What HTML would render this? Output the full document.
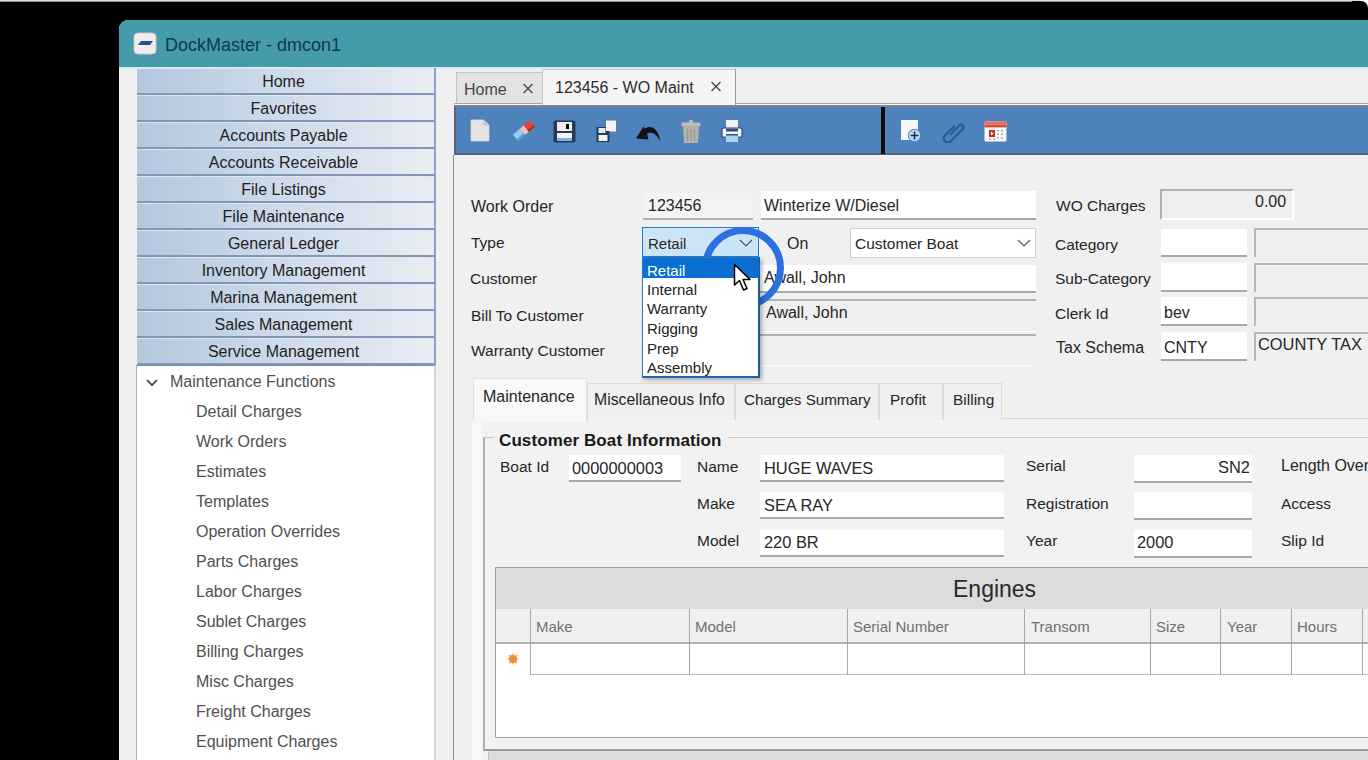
<!DOCTYPE html>
<html><head><meta charset="utf-8">
<style>
*{margin:0;padding:0;box-sizing:border-box}
html,body{width:1368px;height:760px;overflow:hidden;background:#000}
body{position:relative;font-family:"Liberation Sans",sans-serif;color:#262626}
.a{position:absolute}
.t{position:absolute;white-space:nowrap;line-height:1;font-size:16px}
#topline{left:0;top:0;width:1368px;height:2px;background:linear-gradient(#fff,#777)}
#tr{right:0;top:0;width:8px;height:8px;background:#fff}
#trc{right:0;top:1px;width:16px;height:16px;background:#000;border-top-right-radius:7px}
#win{left:119px;top:20px;width:1260px;height:745px;background:#f0f0f0;border-top-left-radius:9px;overflow:hidden}
#title{left:119px;top:20px;width:1260px;height:47px;background:#469bab;border-top-left-radius:9px}
#ttext{left:165px;top:36px;font-size:18px;color:#0c3a4f}
#tline{left:119px;top:67px;width:1260px;height:2px;background:#d2ecf2}
.sb{position:absolute;left:137px;width:299px;height:27px;background:linear-gradient(90deg,#b3c7df 0%,#c9d7e8 40%,#e9edf3 100%);border-bottom:2px solid #8296b6;border-right:2px solid #8aa2d0;box-shadow:inset 0 1px 0 #dfe8f2}
.sb span{position:absolute;left:0;width:293px;text-align:center;top:6px;font-size:16px;line-height:1;color:#1e1e1e}
#tree{left:136px;top:365px;width:300px;height:420px;background:#fff;border-left:1px solid #b5b5b5;border-right:2px solid #d7d7d7;border-top:1px solid #6f87b4}
.ti{position:absolute;left:59px;font-size:16px;line-height:1;color:#505050;white-space:nowrap}

.bx{position:absolute}
.lbl{position:absolute;white-space:nowrap;line-height:1;font-size:15.5px;color:#262626}
.fw{position:absolute;background:#fff;border-bottom:2px solid #a8a8a8}
.fg{position:absolute;background:#f0f0f0;border-bottom:2px solid #b4b4b4}
.tab2{position:absolute;background:#f0f0f0;border:1px solid #dadada;border-bottom:none}
.col{position:absolute;top:609px;width:1px;height:66px;background:#a8a8a8}
.hd{position:absolute;top:619px;font-size:15px;line-height:1;color:#707070;white-space:nowrap}
</style></head><body>
<div id="topline" class="a"></div>
<div id="tr" class="a"></div><div id="trc" class="a"></div>
<div id="win" class="a"></div>
<div id="title" class="a"></div>
  <svg class="a" style="left:133px;top:32px" width="24" height="23" viewBox="0 0 24 23"><rect x="1" y="1" width="22" height="21" rx="4" fill="#f1ecec" stroke="#cfc6c6" stroke-width="1"/><path d="M5 13 L8 9 L20 9 L17 13 Z" fill="#214f9a"/></svg>
  <div id="ttext" class="t">DockMaster - dmcon1</div>
<div id="tline" class="a"></div>
<div class="sb" style="top:68px"><span>Home</span></div>
<div class="sb" style="top:95px"><span>Favorites</span></div>
<div class="sb" style="top:122px"><span>Accounts Payable</span></div>
<div class="sb" style="top:149px"><span>Accounts Receivable</span></div>
<div class="sb" style="top:176px"><span>File Listings</span></div>
<div class="sb" style="top:203px"><span>File Maintenance</span></div>
<div class="sb" style="top:230px"><span>General Ledger</span></div>
<div class="sb" style="top:257px"><span>Inventory Management</span></div>
<div class="sb" style="top:284px"><span>Marina Management</span></div>
<div class="sb" style="top:311px"><span>Sales Management</span></div>
<div class="sb" style="top:338px"><span>Service Management</span></div>
<div id="tree" class="a">
  <svg class="a" style="left:9px;top:13px" width="12" height="8" viewBox="0 0 12 8"><path d="M1 1 L6 6 L11 1" fill="none" stroke="#333" stroke-width="1.6"/></svg>
  <div class="ti" style="left:33px;top:8px">Maintenance Functions</div>
  <div class="ti" style="top:38px">Detail Charges</div>
  <div class="ti" style="top:68px">Work Orders</div>
  <div class="ti" style="top:98px">Estimates</div>
  <div class="ti" style="top:128px">Templates</div>
  <div class="ti" style="top:158px">Operation Overrides</div>
  <div class="ti" style="top:188px">Parts Charges</div>
  <div class="ti" style="top:218px">Labor Charges</div>
  <div class="ti" style="top:248px">Sublet Charges</div>
  <div class="ti" style="top:278px">Billing Charges</div>
  <div class="ti" style="top:308px">Misc Charges</div>
  <div class="ti" style="top:338px">Freight Charges</div>
  <div class="ti" style="top:368px">Equipment Charges</div>
</div>
<!-- MAIN -->

<!-- top tabs -->
<div class="bx" style="left:454px;top:103px;width:914px;height:3px;background:#f8f8f8;border-top:1px solid #a4a4a4"></div>
<div class="bx" style="left:456px;top:72px;width:87px;height:32px;background:#e3e3e3;border:1px solid #c4c4c4;border-bottom:1px solid #a4a4a4"></div>
<div class="lbl" style="left:464px;top:82px;font-size:16px;color:#464646">Home</div>
<svg class="bx" style="left:522px;top:83px" width="12" height="11" viewBox="0 0 12 11"><path d="M1.5 1 L10.5 10 M10.5 1 L1.5 10" stroke="#444" stroke-width="1.3"/></svg>
<div class="bx" style="left:542px;top:69px;width:194px;height:37px;background:#f5f5f5;border:1px solid #c8c8c8;border-right:1px solid #9a9a9a;border-bottom:none"></div>
<div class="lbl" style="left:555px;top:80px;font-size:16px;color:#2a2a2a">123456 - WO Maint</div>
<svg class="bx" style="left:710px;top:81px" width="12" height="11" viewBox="0 0 12 11"><path d="M1.5 1 L10.5 10 M10.5 1 L1.5 10" stroke="#444" stroke-width="1.3"/></svg>
<!-- toolbar -->
<div class="bx" style="left:454px;top:105px;width:914px;height:50px;background:#4e82bd;border-top:2px solid #7d8590;border-left:2px solid #5b6470;border-bottom:2px solid #56616d"></div>
<div class="bx" style="left:881px;top:107px;width:4px;height:47px;background:#0a0a0a"></div>

<svg class="bx" style="left:470px;top:119px" width="20" height="23" viewBox="0 0 20 23"><path d="M1 1 H14 L19 6 V22 H1 Z" fill="#e6e4e2" stroke="#d8d6d2" stroke-width="0.8"/><path d="M14 1 V6 H19" fill="#c9cfd8" stroke="#b8bcc4" stroke-width="0.8"/></svg>
<svg class="bx" style="left:511px;top:119px" width="26" height="23" viewBox="0 0 26 23"><g transform="rotate(-40 13 11.5)"><rect x="2" y="7.5" width="9" height="8" fill="#92cdf2"/><rect x="11" y="7.5" width="5" height="8" fill="#f4c4b8"/><rect x="16" y="7.5" width="8" height="8" fill="#e2483a"/><rect x="2" y="13.5" width="9" height="2" fill="#5a9ad0"/><rect x="16" y="13.5" width="8" height="2" fill="#b02a20"/></g></svg>
<svg class="bx" style="left:553px;top:120px" width="23" height="23" viewBox="0 0 23 23"><rect x="0.5" y="0.5" width="22" height="22" rx="2" fill="#26395a"/><rect x="4" y="2" width="15" height="9" fill="#eeeeee"/><rect x="13" y="4" width="3" height="5" fill="#000"/><rect x="4" y="13" width="15" height="5" fill="#f4f4f4"/><rect x="4" y="18" width="15" height="3" fill="#7fb2e0"/></svg>
<svg class="bx" style="left:596px;top:120px" width="21" height="23" viewBox="0 0 21 23"><rect x="10" y="0.5" width="10" height="11" fill="#f2f2f2"/><rect x="0.5" y="7" width="13" height="15" fill="#26395a"/><rect x="2.5" y="8" width="7" height="5" fill="#e8e8e8"/><rect x="2.5" y="15" width="9" height="6" fill="#f2f2f2"/><rect x="10" y="7" width="4" height="4" fill="#f2f2f2"/></svg>
<svg class="bx" style="left:635px;top:123px" width="27" height="20" viewBox="0 0 27 20"><path d="M1 15.5 L8.5 3.5 L9.5 5.5 C17 1 23.5 6 25.5 19 C21.5 10.5 17 8.5 12 10.5 L13.5 16.5 Z" fill="#141414"/></svg>
<svg class="bx" style="left:681px;top:119px" width="20" height="25" viewBox="0 0 20 25"><rect x="8" y="1" width="4" height="3" fill="#b4b4ac"/><rect x="0.5" y="3.5" width="19" height="4" rx="1" fill="#bdbdb5"/><path d="M2 7.5 H18 L17 24 H3 Z" fill="#b3b3ab"/><path d="M6.5 10 V22 M10 10 V22 M13.5 10 V22" stroke="#9a9a92" stroke-width="1.3"/></svg>
<svg class="bx" style="left:721px;top:119px" width="22" height="24" viewBox="0 0 22 24"><rect x="5" y="1" width="12" height="11" fill="#eef2f4"/><path d="M1 10 Q1 9 3 9 H19 Q21 9 21 11 V18 H1 Z" fill="#f4f6f8" stroke="#2e4a7a" stroke-width="1.2"/><rect x="5" y="9.5" width="12" height="3" fill="#2e4a7a"/><rect x="5" y="15" width="12" height="8" fill="#a8d4ec"/><rect x="5" y="15" width="12" height="1.5" fill="#2e4a7a"/></svg>
<svg class="bx" style="left:900px;top:119px" width="23" height="24" viewBox="0 0 23 24"><rect x="1" y="1" width="17" height="20" fill="#f6f6fa"/><circle cx="14.5" cy="16.5" r="6.2" fill="#b8dcf4" stroke="#4a80b8" stroke-width="1"/><path d="M14.5 12.5 V20.5 M10.5 16.5 H18.5" stroke="#1a3050" stroke-width="1.6"/></svg>
<svg class="bx" style="left:942px;top:122px" width="23" height="21" viewBox="0 0 23 21"><path d="M9 12 L17 3.5 Q19.5 1.5 21 3.5 Q22.5 5.5 20.5 7.5 L9 19 Q6 21.5 3 19 Q0.5 16.5 3 13.5 L12 4.5" fill="none" stroke="#2a5a9e" stroke-width="2.3" stroke-linecap="round"/></svg>
<svg class="bx" style="left:984px;top:121px" width="23" height="21" viewBox="0 0 23 21"><rect x="0.5" y="0.5" width="22" height="20" rx="1.5" fill="#f8f8fa"/><rect x="0.5" y="0.5" width="22" height="6" fill="#e8735e"/><rect x="0.5" y="4.5" width="22" height="1.5" fill="#c8483a"/><rect x="5" y="9" width="6" height="7" fill="#c43224"/><path d="M7 10.5 L9.5 12.5 L7 14.5Z" fill="#fff"/><g fill="#9aa8b8"><rect x="13" y="9" width="2" height="1.5"/><rect x="17" y="9" width="2" height="1.5"/><rect x="13" y="12.5" width="2" height="1.5"/><rect x="17" y="12.5" width="2" height="1.5"/><rect x="13" y="16" width="2" height="1.5"/><rect x="17" y="16" width="2" height="1.5"/><rect x="5" y="17.5" width="2" height="1.5"/><rect x="9" y="17.5" width="2" height="1.5"/></g></svg>

<!-- form labels -->
<div class="lbl" style="left:471px;top:199px;font-size:16px">Work Order</div>
<div class="lbl" style="left:471px;top:235px">Type</div>
<div class="lbl" style="left:470px;top:271px">Customer</div>
<div class="lbl" style="left:471px;top:308px">Bill To Customer</div>
<div class="lbl" style="left:471px;top:343px">Warranty Customer</div>
<!-- fields -->
<div class="fg" style="left:643px;top:193px;width:110px;height:27px;background:#f3f3f3"></div>
<div class="lbl" style="left:648px;top:198px;font-size:16px">123456</div>
<div class="fw" style="left:761px;top:191px;width:275px;height:29px"></div>
<div class="lbl" style="left:764px;top:198px;font-size:16px">Winterize W/Diesel</div>
<div class="lbl" style="left:787px;top:236px;font-size:16px">On</div>
<div class="bx" style="left:850px;top:228px;width:186px;height:30px;background:#fff;border:1px solid #cfcfcf"></div>
<div class="lbl" style="left:855px;top:236px">Customer Boat</div>
<svg class="bx" style="left:1017px;top:239px" width="14" height="8" viewBox="0 0 14 8"><path d="M1 1 L7 7 L13 1" fill="none" stroke="#555" stroke-width="1.2"/></svg>
<div class="fw" style="left:760px;top:265px;width:276px;height:28px"></div>
<div class="lbl" style="left:764px;top:270px;font-size:16px">Awall, John</div>
<div class="bx" style="left:760px;top:299px;width:276px;height:33px;background:#efefef;border-top:2px solid #b2b2b2;border-bottom:1px solid #fbfbfb"></div>
<div class="lbl" style="left:766px;top:305px;font-size:16px">Awall, John</div>
<div class="bx" style="left:760px;top:334px;width:276px;height:32px;background:#efefef;border-top:2px solid #b2b2b2;border-bottom:1px solid #fbfbfb"></div>
<!-- right labels -->
<div class="lbl" style="left:1056px;top:198px">WO Charges</div>
<div class="lbl" style="left:1055px;top:237px">Category</div>
<div class="lbl" style="left:1055px;top:271px">Sub-Category</div>
<div class="lbl" style="left:1055px;top:306px">Clerk Id</div>
<div class="lbl" style="left:1056px;top:340px;font-size:16px">Tax Schema</div>
<div class="bx" style="left:1160px;top:189px;width:134px;height:31px;background:#efefef;border-top:2px solid #b0b0b0;border-left:2px solid #b0b0b0;border-right:2px solid #fff;border-bottom:2px solid #fff"></div>
<div class="lbl" style="left:1255px;top:194px;font-size:16px">0.00</div>
<div class="fw" style="left:1161px;top:229px;width:86px;height:28px"></div>
<div class="fw" style="left:1161px;top:263px;width:86px;height:29px"></div>
<div class="fw" style="left:1161px;top:297px;width:86px;height:29px"></div>
<div class="lbl" style="left:1164px;top:305px;font-size:16px">bev</div>
<div class="fw" style="left:1161px;top:332px;width:86px;height:29px"></div>
<div class="lbl" style="left:1164px;top:340px;font-size:16px">CNTY</div>
<div class="bx" style="left:1254px;top:228px;width:120px;height:29px;background:#f0f0f0;border-top:2px solid #b8b8b8;border-left:2px solid #b8b8b8"></div>
<div class="bx" style="left:1254px;top:263px;width:120px;height:29px;background:#f0f0f0;border-top:2px solid #b8b8b8;border-left:2px solid #b8b8b8"></div>
<div class="bx" style="left:1254px;top:297px;width:120px;height:29px;background:#f0f0f0;border-top:2px solid #b8b8b8;border-left:2px solid #b8b8b8"></div>
<div class="bx" style="left:1254px;top:332px;width:120px;height:29px;background:#f0f0f0;border-top:2px solid #b8b8b8;border-left:2px solid #b8b8b8"></div>
<div class="lbl" style="left:1258px;top:336px;font-size:16.4px">COUNTY TAX</div>
<!-- lower tabs -->
<div class="bx" style="left:453px;top:155px;width:1px;height:605px;background:#8a8a8a"></div>
<div class="bx" style="left:472px;top:420px;width:900px;height:340px;background:#f2f2f2;border-left:10px solid #f8f8f8"></div>
<div class="bx" style="left:586px;top:418px;width:782px;height:1px;background:#d6d6d6"></div>
<div class="tab2" style="left:587px;top:383px;width:148px;height:37px"></div>
<div class="tab2" style="left:735px;top:383px;width:144px;height:37px"></div>
<div class="tab2" style="left:879px;top:383px;width:64px;height:37px"></div>
<div class="tab2" style="left:943px;top:383px;width:59px;height:37px"></div>
<div class="bx" style="left:473px;top:378px;width:114px;height:44px;background:#f8f8f8;border:1px solid #e0e0e0;border-bottom:none"></div>
<div class="lbl" style="left:483px;top:389px;font-size:16px">Maintenance</div>
<div class="lbl" style="left:594px;top:392px;font-size:15.8px">Miscellaneous Info</div>
<div class="lbl" style="left:744px;top:392px;font-size:15.2px">Charges Summary</div>
<div class="lbl" style="left:890px;top:392px">Profit</div>
<div class="lbl" style="left:953px;top:392px">Billing</div>
<!-- group box -->
<div class="bx" style="left:483px;top:437px;width:890px;height:314px;border-top:1px solid #c8c8c8;border-left:2px solid #b0b0b0;border-bottom:2px solid #9c9c9c"></div>
<div class="bx" style="left:494px;top:428px;width:234px;height:20px;background:#f2f2f2"></div>
<div class="lbl" style="left:499px;top:432px;font-size:17px;font-weight:bold;letter-spacing:0.1px;color:#1a1a1a">Customer Boat Information</div>
<div class="lbl" style="left:500px;top:459px">Boat Id</div>
<div class="fw" style="left:569px;top:455px;width:112px;height:27px"></div>
<div class="lbl" style="left:572px;top:460px;font-size:16.4px">0000000003</div>
<div class="lbl" style="left:697px;top:459px">Name</div>
<div class="lbl" style="left:697px;top:496px">Make</div>
<div class="lbl" style="left:697px;top:533px">Model</div>
<div class="fw" style="left:760px;top:455px;width:244px;height:27px"></div>
<div class="fw" style="left:760px;top:492px;width:244px;height:27px"></div>
<div class="fw" style="left:760px;top:530px;width:244px;height:27px"></div>
<div class="lbl" style="left:764px;top:460px;font-size:16.4px">HUGE WAVES</div>
<div class="lbl" style="left:764px;top:497px;font-size:16.4px">SEA RAY</div>
<div class="lbl" style="left:764px;top:534px;font-size:16.4px">220 BR</div>
<div class="lbl" style="left:1026px;top:458px">Serial</div>
<div class="lbl" style="left:1026px;top:496px">Registration</div>
<div class="lbl" style="left:1026px;top:533px">Year</div>
<div class="fw" style="left:1134px;top:455px;width:118px;height:28px"></div>
<div class="fw" style="left:1134px;top:492px;width:118px;height:28px"></div>
<div class="fw" style="left:1134px;top:530px;width:118px;height:28px"></div>
<div class="lbl" style="left:1218px;top:459px;font-size:16.4px">SN2</div>
<div class="lbl" style="left:1137px;top:534px;font-size:16.4px">2000</div>
<div class="lbl" style="left:1281px;top:458px;font-size:16px">Length Over</div>
<div class="lbl" style="left:1281px;top:496px">Access</div>
<div class="lbl" style="left:1281px;top:533px">Slip Id</div>
<!-- engines grid -->
<div class="bx" style="left:495px;top:567px;width:880px;height:171px;background:#fff;border:1px solid #a0a0a0;border-right:none"></div>
<div class="bx" style="left:496px;top:568px;width:872px;height:41px;background:#dcdcdc"></div>
<div class="lbl" style="left:953px;top:578px;font-size:23px;color:#2a2a2a">Engines</div>
<div class="bx" style="left:496px;top:609px;width:872px;height:35px;background:#f0f0f0;border-bottom:2px solid #b0b0b0"></div>
<div class="bx" style="left:530px;top:674px;width:838px;height:1px;background:#b8b8b8"></div>
<div class="col" style="left:530px"></div>
<div class="col" style="left:689px"></div>
<div class="col" style="left:847px"></div>
<div class="col" style="left:1024px"></div>
<div class="col" style="left:1150px"></div>
<div class="col" style="left:1220px"></div>
<div class="col" style="left:1291px"></div>
<div class="col" style="left:1362px"></div>
<div class="hd" style="left:536px">Make</div>
<div class="hd" style="left:695px">Model</div>
<div class="hd" style="left:853px">Serial Number</div>
<div class="hd" style="left:1031px">Transom</div>
<div class="hd" style="left:1156px">Size</div>
<div class="hd" style="left:1227px">Year</div>
<div class="hd" style="left:1297px">Hours</div>
<svg class="bx" style="left:506px;top:652px" width="14" height="14" viewBox="0 0 14 14"><g stroke="#f2a04a" stroke-width="1.2"><path d="M7 1.5V12.5M1.5 7H12.5M3 3L11 11M11 3L3 11"/></g><circle cx="7" cy="7" r="4" fill="#ee8a30"/></svg>
<div class="bx" style="left:488px;top:751px;width:880px;height:9px;background:#dcdcdc;border-left:1px solid #c0c0c0"></div>
<!-- combobox + dropdown -->
<div class="bx" style="left:642px;top:227px;width:117px;height:30px;background:#cce4f7;border:1px solid #2b7cc4"></div>
<div class="lbl" style="left:648px;top:236px;font-size:15px">Retail</div>
<svg class="bx" style="left:739px;top:239px" width="14" height="8" viewBox="0 0 14 8"><path d="M1 1 L7 7 L13 1" fill="none" stroke="#555" stroke-width="1.2"/></svg>
<div id="ring" class="bx" style="left:702px;top:227px;width:82px;height:82px;border:7px solid #2c6fe0;border-radius:50%"></div>
<div class="bx" style="left:642px;top:257px;width:118px;height:121px;background:#fff;border:1px solid #2a7cc8;border-right:2px solid #1a5c9c;border-bottom:2px solid #1f64a8;box-shadow:2px 2px 4px rgba(0,0,0,0.3)"></div>
<div class="bx" style="left:643px;top:258px;width:116px;height:20px;background:#0a6fd0"></div>
<div class="lbl" style="left:647px;top:263px;font-size:15px;color:#fff">Retail</div>
<div class="lbl" style="left:647px;top:282px;font-size:15px;color:#222">Internal</div>
<div class="lbl" style="left:647px;top:301px;font-size:15px;color:#222">Warranty</div>
<div class="lbl" style="left:647px;top:321px;font-size:15px;color:#222">Rigging</div>
<div class="lbl" style="left:647px;top:341px;font-size:15px;color:#222">Prep</div>
<div class="lbl" style="left:647px;top:360px;font-size:15px;color:#222">Assembly</div>
<svg class="bx" style="left:733px;top:263px" width="22" height="32" viewBox="0 0 22 32"><path d="M1.5 1.5 L1.5 22 L6.5 17.5 L10.5 27 L14 25.5 L10 16.5 L17 16.5 Z" fill="#fff" stroke="#000" stroke-width="1.5" stroke-linejoin="round"/></svg>
</body></html>
